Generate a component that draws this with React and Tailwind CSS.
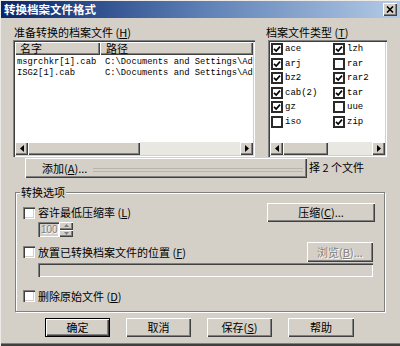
const raised = "bg-[#d4d0c8] shadow-[inset_1px_1px_0_#fff,inset_-1px_-1px_0_#404040,inset_-2px_-2px_0_#808080]";
const sunken = "shadow-[inset_1px_1px_0_#808080,inset_2px_2px_0_#404040,inset_-1px_-1px_0_#fff,inset_-2px_-2px_0_#d4d0c8]";
const disabledText = "text-[#808080] [text-shadow:1px_1px_0_#fff]";

function Arrow({ dir }) {
  return (
    <div className={`w-[13px] h-full shrink-0 flex items-center justify-center ${raised}`}>
      <svg width="4" height="7" viewBox="0 0 4 7">
        <path d={dir === 'left' ? 'M4 0 L0 3.5 L4 7Z' : 'M0 0 L4 3.5 L0 7Z'} fill="#000" />
      </svg>
    </div>
  );
}

function HScroll({ thumbClass }) {
  return (
    <div className="flex h-[13px] shrink-0">
      <Arrow dir="left" />
      <div className={`h-full shrink-0 ${thumbClass} ${raised}`} />
      <div className="flex-1 h-full bg-[#e9e7e2]" />
      <Arrow dir="right" />
    </div>
  );
}

function ListCheck({ label, checked }) {
  return (
    <div className="flex items-center h-[14.5px]">
      <div className="w-[12px] h-[12px] border-2 border-[#2a2a2a] bg-white flex items-center justify-center">
        {checked && (
          <svg width="8" height="8" viewBox="0 0 8 8">
            <path d="M1 3.8 L3.2 6 L7 1.6" stroke="#000" strokeWidth="1.7" fill="none" />
          </svg>
        )}
      </div>
      <span className="ml-[2px] font-['Liberation_Mono',monospace] text-[9px] leading-[12px] text-black">{label}</span>
    </div>
  );
}

function Box() {
  return <div className={`w-[12px] h-[12px] shrink-0 bg-white ${sunken}`} />;
}

function Mn({ k }) {
  return (
    <span>
      (<span className="underline">{k}</span>)
    </span>
  );
}

const types = [
  ['ace', true], ['lzh', true],
  ['arj', true], ['rar', false],
  ['bz2', true], ['rar2', true],
  ['cab(2)', true], ['tar', true],
  ['gz', true], ['uue', false],
  ['iso', false], ['zip', true],
];

const files = [
  ['msgrchkr[1].cab', 'C:\\Documents and Settings\\Ad'],
  ['ISG2[1].cab', 'C:\\Documents and Settings\\Ad'],
];

export default function App() {
  return (
    <div className="w-[400px] h-[346px] bg-[#d4d0c8] overflow-hidden flex flex-col border-l border-t border-[#ecebe8] font-['Noto_Sans_CJK_SC',sans-serif] text-[11px] text-black select-none">
      {/* 标题栏 */}
      <div className="h-[17px] shrink-0 flex items-center justify-between bg-linear-to-r from-[#0a246a] via-[#5d7fb4] to-[#b4cbe6]">
        <span className="ml-[3px] text-white font-bold text-[11.5px] leading-[17px]">转换档案文件格式</span>
        <div className={`mr-[3px] w-[14px] h-[13px] flex items-center justify-center ${raised}`}>
          <svg width="8" height="7" viewBox="0 0 8 7">
            <path d="M1 0.5 L7 6.5 M7 0.5 L1 6.5" stroke="#000" strokeWidth="1.6" />
          </svg>
        </div>
      </div>

      {/* 上部两个列表 */}
      <div className="flex pt-[8px] shrink-0">
        <div className="ml-[12px] w-[242px] flex flex-col">
          <div className="h-[12px] leading-[12px] ml-[1px]">准备转换的档案文件 <Mn k="H" /></div>
          <div className={`mt-[2px] h-[117px] bg-white p-[2px] flex flex-col ${sunken}`}>
            <div className="flex h-[13px] shrink-0">
              <div className={`w-[85px] pl-[5px] leading-[13px] ${raised}`}>名字</div>
              <div className={`flex-1 pl-[6px] leading-[13px] ${raised}`}>路径</div>
            </div>
            <div className="mt-[2px] font-['Liberation_Mono',monospace] text-[8.8px] leading-[11px]">
              {files.map(([n, p]) => (
                <div key={n} className="flex pl-[2px] whitespace-nowrap">
                  <span className="w-[88px] shrink-0">{n}</span>
                  <span>{p}</span>
                </div>
              ))}
            </div>
            <div className="flex-1" />
            <HScroll thumbClass="w-[112px]" />
          </div>
        </div>

        <div className="ml-[11px] w-[122px] flex flex-col">
          <div className="h-[12px] leading-[12px]">档案文件类型 <Mn k="T" /></div>
          <div className={`mt-[2px] ml-[2px] w-[119px] h-[117px] bg-white p-[2px] flex flex-col ${sunken}`}>
            <div className="grid grid-cols-[62px_1fr] pl-[1px]">
              {types.map(([t, c]) => (
                <ListCheck key={t} label={t} checked={c} />
              ))}
            </div>
            <div className="flex-1" />
            <HScroll thumbClass="w-[45px]" />
          </div>
        </div>
      </div>

      {/* 添加 */}
      <div className="flex items-center mt-[1px] h-[20px] shrink-0">
        <div className={`ml-[24px] w-[282px] h-full flex items-center pl-[17px] ${raised}`}>
          <span>添加<Mn k="A" />...</span>
          <div className="ml-[6px] flex-1 mr-[4px] h-[4px] mt-[4px] border-t border-b border-[#b8b4ac]" />
        </div>
        <span className="ml-[2px] -mt-[2px]">择 2 个文件</span>
      </div>

      {/* 转换选项 */}
      <div className="relative mt-[14px] ml-[14px] w-[370px] h-[120px] shrink-0 border border-[#808080] shadow-[inset_1px_1px_0_#fff,1px_1px_0_#fff]">
        <span className="absolute -top-[8px] left-[4px] px-[1px] bg-[#d4d0c8] leading-[14px]">转换选项</span>

        <div className="flex items-center mt-[10px] h-[19px]">
          <div className="ml-[7px]"><Box /></div>
          <span className="ml-[3px]">容许最低压缩率 <Mn k="L" /></span>
          <div className="flex-1" />
          <div className={`mr-[9px] w-[108px] h-full flex items-center justify-center ${raised}`}>
            <span>压缩<Mn k="C" />...</span>
          </div>
        </div>

        <div className="flex ml-[22px] h-[15px]">
          <div className={`w-[21px] h-full bg-[#d4d0c8] pl-[3px] font-['Liberation_Sans',sans-serif] text-[10px] leading-[15px] ${disabledText} ${sunken}`}>100</div>
          <div className="w-[14px] h-full flex flex-col">
            <div className={`flex-1 flex items-center justify-center ${raised}`}>
              <svg width="5" height="3" viewBox="0 0 5 3"><path d="M0 3 L2.5 0 L5 3Z" fill="#808080" /></svg>
            </div>
            <div className={`flex-1 flex items-center justify-center ${raised}`}>
              <svg width="5" height="3" viewBox="0 0 5 3"><path d="M0 0 L2.5 3 L5 0Z" fill="#808080" /></svg>
            </div>
          </div>
        </div>

        <div className="flex items-center mt-[5px] h-[20px]">
          <div className="ml-[7px]"><Box /></div>
          <span className="ml-[3px]">放置已转换档案文件的位置 <Mn k="F" /></span>
          <div className="flex-1" />
          <div className={`mr-[11px] w-[66px] h-full flex items-center justify-center ${raised}`}>
            <span className={disabledText}>浏览<Mn k="B" />...</span>
          </div>
        </div>

        <div className={`mt-[1px] ml-[22px] mr-[11px] h-[14px] bg-[#d4d0c8] ${sunken}`} />

        <div className="flex items-center mt-[13px] h-[12px]">
          <div className="ml-[7px]"><Box /></div>
          <span className="ml-[3px]">删除原始文件 <Mn k="D" /></span>
        </div>
      </div>

      {/* 按钮 */}
      <div className="flex gap-[16px] ml-[44px] mt-[6px] h-[19px] shrink-0">
        <div className="w-[65px] h-full flex items-center justify-center bg-[#d4d0c8] border border-black shadow-[inset_1px_1px_0_#fff,inset_-1px_-1px_0_#404040,inset_-2px_-2px_0_#808080]">确定</div>
        <div className={`w-[65px] h-full flex items-center justify-center ${raised}`}>取消</div>
        <div className={`w-[65px] h-full flex items-center justify-center ${raised}`}>
          <span>保存<Mn k="S" /></span>
        </div>
        <div className={`w-[66px] h-full flex items-center justify-center ${raised}`}>帮助</div>
      </div>

      <div className="mt-auto h-[3px] shrink-0 border-t border-[#808080] bg-[#404040]" />
    </div>
  );
}
